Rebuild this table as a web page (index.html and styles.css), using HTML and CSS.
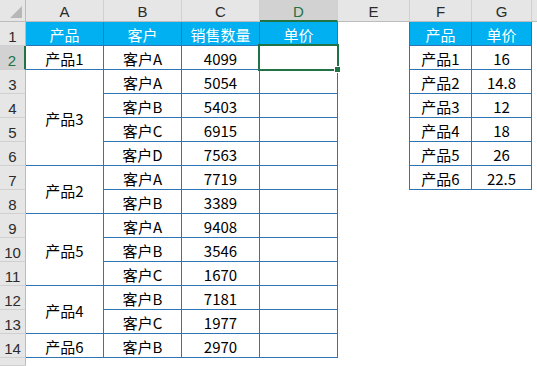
FILE: index.html
```html
<!DOCTYPE html>
<html lang="zh">
<head>
<meta charset="utf-8">
<title>销售数量</title>
<link rel="stylesheet" href="styles.css">
</head>
<body>
<div class="sheet">
  <div class="grid">
    <!-- column headers -->
    <div class="corner"><span class="tri"></span></div>
    <div class="ch">A</div>
    <div class="ch">B</div>
    <div class="ch">C</div>
    <div class="ch sel">D</div>
    <div class="ch">E</div>
    <div class="ch">F</div>
    <div class="ch">G</div>
    <div class="ch last"></div>

    <!-- row 1 -->
    <div class="rh">1</div>
    <div class="c h">产品</div>
    <div class="c h">客户</div>
    <div class="c h">销售数量</div>
    <div class="c h">单价</div>
    <div class="e eb"></div>
    <div class="c h">产品</div>
    <div class="c h">单价</div>
    <div class="e"></div>

    <!-- row 2 -->
    <div class="rh sel">2</div>
    <div class="c">产品1</div>
    <div class="c">客户A</div>
    <div class="c">4099</div>
    <div class="c"></div>
    <div class="e eb"></div>
    <div class="c">产品1</div>
    <div class="c">16</div>
    <div class="e"></div>

    <!-- row 3 -->
    <div class="rh">3</div>
    <div class="c span4">产品3</div>
    <div class="c">客户A</div>
    <div class="c">5054</div>
    <div class="c"></div>
    <div class="e eb"></div>
    <div class="c">产品2</div>
    <div class="c">14.8</div>
    <div class="e"></div>

    <!-- row 4 -->
    <div class="rh">4</div>
    <div class="c">客户B</div>
    <div class="c">5403</div>
    <div class="c"></div>
    <div class="e eb"></div>
    <div class="c">产品3</div>
    <div class="c">12</div>
    <div class="e"></div>

    <!-- row 5 -->
    <div class="rh">5</div>
    <div class="c">客户C</div>
    <div class="c">6915</div>
    <div class="c"></div>
    <div class="e eb"></div>
    <div class="c">产品4</div>
    <div class="c">18</div>
    <div class="e"></div>

    <!-- row 6 -->
    <div class="rh">6</div>
    <div class="c">客户D</div>
    <div class="c">7563</div>
    <div class="c"></div>
    <div class="e eb"></div>
    <div class="c">产品5</div>
    <div class="c">26</div>
    <div class="e"></div>

    <!-- row 7 -->
    <div class="rh">7</div>
    <div class="c span2">产品2</div>
    <div class="c">客户A</div>
    <div class="c">7719</div>
    <div class="c"></div>
    <div class="e eb"></div>
    <div class="c">产品6</div>
    <div class="c">22.5</div>
    <div class="e"></div>

    <!-- row 8 -->
    <div class="rh">8</div>
    <div class="c">客户B</div>
    <div class="c">3389</div>
    <div class="c"></div>
    <div class="e rest"></div>

    <!-- row 9 -->
    <div class="rh">9</div>
    <div class="c span3">产品5</div>
    <div class="c">客户A</div>
    <div class="c">9408</div>
    <div class="c"></div>
    <div class="e rest"></div>

    <!-- row 10 -->
    <div class="rh">10</div>
    <div class="c">客户B</div>
    <div class="c">3546</div>
    <div class="c"></div>
    <div class="e rest"></div>

    <!-- row 11 -->
    <div class="rh">11</div>
    <div class="c">客户C</div>
    <div class="c">1670</div>
    <div class="c"></div>
    <div class="e rest"></div>

    <!-- row 12 -->
    <div class="rh">12</div>
    <div class="c span2">产品4</div>
    <div class="c">客户B</div>
    <div class="c">7181</div>
    <div class="c"></div>
    <div class="e rest"></div>

    <!-- row 13 -->
    <div class="rh">13</div>
    <div class="c">客户C</div>
    <div class="c">1977</div>
    <div class="c"></div>
    <div class="e rest"></div>

    <!-- row 14 -->
    <div class="rh">14</div>
    <div class="c">产品6</div>
    <div class="c">客户B</div>
    <div class="c">2970</div>
    <div class="c"></div>
    <div class="e rest"></div>

    <!-- row 15 (partial) -->
    <div class="rh"></div>
    <div class="e restall"></div>
  </div>

  <div class="selection"></div>
  <div class="handle"></div>
</div>
</body>
</html>
```

FILE: styles.css
```css
html, body {
  margin: 0;
  padding: 0;
  background: #ffffff;
}

body {
  width: 537px;
  height: 366px;
  overflow: hidden;
  font-family: "Noto Sans CJK SC", "Noto Sans", sans-serif;
  font-size: 15px;
  color: #000000;
}

.sheet {
  position: relative;
  width: 537px;
  height: 366px;
  overflow: hidden;
}

.grid {
  display: grid;
  grid-template-columns: 26px 78px 78px 78px 78px 72px 62px 60px 1fr;
  grid-template-rows: 22px repeat(14, 24px) 1fr;
  width: 537px;
  height: 366px;
}

.grid > div {
  box-sizing: border-box;
  display: flex;
  align-items: center;
  justify-content: center;
  line-height: 1;
  white-space: nowrap;
}

/* column header row */
.corner {
  position: relative;
  background: #e6e6e6;
  border-right: 1px solid #bcbcbc;
  border-bottom: 1px solid #bcbcbc;
}

.tri {
  position: absolute;
  right: 3px;
  bottom: 3px;
  width: 0;
  height: 0;
  border-left: 12px solid transparent;
  border-bottom: 12px solid #b7b7b7;
}

.ch {
  background: #e6e6e6;
  border-right: 1px solid #d0d0d0;
  border-bottom: 1px solid #bcbcbc;
  color: #2b2b2b;
  font-family: "Liberation Sans", "Noto Sans", sans-serif;
  font-size: 15px;
  padding-top: 2px;
}

.ch.sel {
  background: #d2d2d2;
  border-bottom: 2px solid #217346;
  color: #217346;
}

.ch.last {
  border-right: 0;
}

/* row headers */
.rh {
  background: #e6e6e6;
  border-right: 1px solid #bcbcbc;
  border-bottom: 1px solid #d0d0d0;
  color: #2b2b2b;
  font-family: "Liberation Sans", "Noto Sans", sans-serif;
  font-size: 15px;
  padding-top: 5px;
}

.rh.sel {
  background: #d2d2d2;
  border-right: 2px solid #217346;
  color: #217346;
}

/* data cells */
.c {
  border-right: 1px solid #2e75b6;
  border-bottom: 1px solid #2e75b6;
  padding-top: 1px;
}

.h {
  background: #00b0f0;
  color: #ffffff;
}

.e {
  background: #ffffff;
}

.eb {
  border-right: 1px solid #2e75b6;
}

.span4 { grid-row: span 4; }
.span3 { grid-row: span 3; }
.span2 { grid-row: span 2; }

.rest { grid-column: span 4; }
.restall { grid-column: span 8; }

/* active-cell selection over D2 */
.selection {
  position: absolute;
  left: 258px;
  top: 44px;
  width: 81px;
  height: 27px;
  box-sizing: border-box;
  border: 2px solid #217346;
}

.handle {
  position: absolute;
  left: 334px;
  top: 66px;
  width: 5px;
  height: 5px;
  background: #217346;
  border: 1px solid #ffffff;
}
```
